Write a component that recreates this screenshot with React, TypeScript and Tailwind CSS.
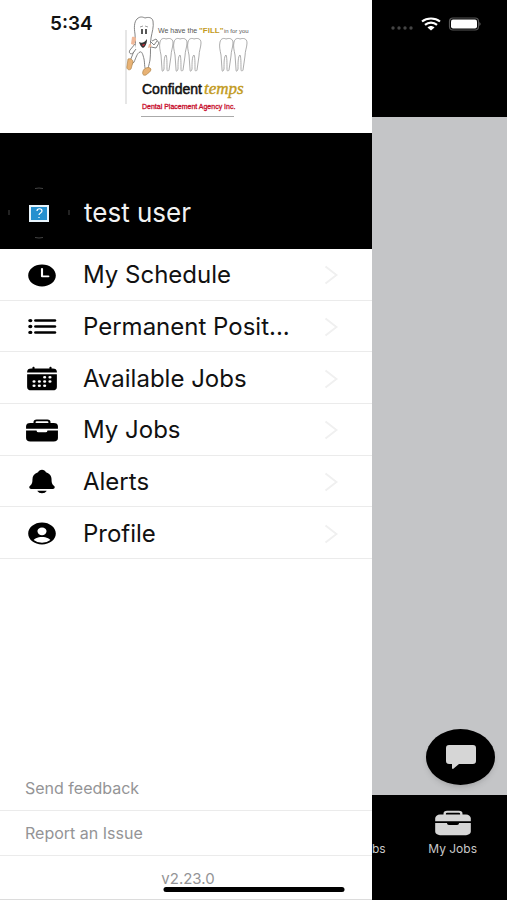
import React from 'react';
import {
  IoBriefcase,
  IoCalendar,
  IoList,
  IoNotifications,
  IoPersonCircle,
  IoTime,
} from 'react-icons/io5';
import type { IconType } from 'react-icons';

interface MenuItem {
  label: string;
  icon: IconType;
}

const menuItems: MenuItem[] = [
  { label: 'My Schedule', icon: IoTime },
  { label: 'Permanent Posit...', icon: IoList },
  { label: 'Available Jobs', icon: IoCalendar },
  { label: 'My Jobs', icon: IoBriefcase },
  { label: 'Alerts', icon: IoNotifications },
  { label: 'Profile', icon: IoPersonCircle },
];

const Logo: React.FC = () => (
  <svg viewBox="0 0 130 108" className="h-[108px] w-[130px]" role="img" aria-label="Confident Temps">
    <path d="M5 16V90" stroke="#dedede" strokeWidth="1.5" />
    {/* Mascot */}
    <g stroke="#666" strokeWidth="0.8" fill="#fff">
      <path d="M16 5c3-3 6-2 8-1 3-1 7-1 8 3 1 6-1 11-2 17-1 7 0 14-1 22-1 5-2 9-3 10-3 0-2-6-3-11-1-4-2-8-4-7-3 1-4 6-6 10-2 3-4 3-4 0 1-5 4-9 5-15 1-5 0-9 0-13-1-6-1-12 2-15z" />
      <path d="M14 30l-5 6c-2 3 1 5 3 3l3-4M29 27l4 4 3-4M30 33l5 1 3-5-3-4-4 2" />
    </g>
    <path d="M21 15v5M25 15v5" stroke="#222" strokeWidth="1.5" />
    <path d="M19 13l3-1M24 12l3 1" stroke="#777" strokeWidth="0.7" />
    <path d="M18 28c3 2 6 0 8-3 0 5-2 8-4 9-2-1-3-3-4-6z" fill="#333" />
    <path d="M21 31c1-1 2-1 3-1-1 2-2 3-3 1z" fill="#d32f3d" />
    <path d="M11 23c2-1 5 0 4 3l-2 5-3-1zM28 30c2 0 3 1 2 3l-3 1z" fill="#f0b99a" />
    <path
      d="M7 45c3-1 5 1 5 3l-2 7c-2 2-5 0-4-3zM22 57c1-3 6-5 8-2 0 3-3 4-5 6-3 1-4-1-3-4z"
      fill="#e8b274"
      stroke="#a67a3e"
      strokeWidth="0.6"
    />
    {/* Teeth */}
    {[38, 52, 66, 98, 112].map((x) => (
      <path
        key={x}
        transform={`translate(${x} 24)`}
        d="M1 4c1-4 4-4 6-3 3-1 7-1 7 4 0 4-2 8-2 13l-2 14c-1 2-2 1-2-1 0-6 0-12-1-14-2 1-2 8-2 14-1 3-2 3-2 0l-1-14c-1-5-2-9-1-13z"
        fill="#fff"
        stroke="#888"
        strokeWidth="0.7"
      />
    ))}
    <g style={{ fontFamily: '"Liberation Sans", sans-serif' }}>
      <text x="37" y="19" fontSize="7" fill="#555">We have the</text>
      <text x="78" y="19" fontSize="8" fontWeight="700" fill="#c29a20">"FILL"</text>
      <text x="103" y="19" fontSize="6" fill="#555">in for you</text>
      <text x="21" y="80" fontSize="14" fill="#111" stroke="#111" strokeWidth="0.5">Confident</text>
      <text x="21" y="95" fontSize="7" fill="#c8102e" stroke="#c8102e" strokeWidth="0.3">Dental Placement Agency Inc.</text>
    </g>
    <text x="83" y="80" fontSize="17" fontStyle="italic" fill="#c29a20" stroke="#c29a20" strokeWidth="0.4" fontFamily="Liberation Serif, serif">temps</text>
    <path d="M20 102.500H113" stroke="#aaa" />
  </svg>
);

const Avatar: React.FC = () => (
  <svg viewBox="0 0 62 52" className="h-[52px] w-[62px]" role="img" aria-label="Profile picture">
    <path d="M27 1.500q4-1 8 0M27 50.500q4 1 8 0M1 23v5M61 23v5" fill="none" stroke="#444" />
    <path d="M21 18h20v17H21z" fill="#e9f5fc" />
    <path d="M23 20h16v13H23z" fill="#2590cf" />
    <path d="M29 24c0-3 5-3 5 0 0 2-3 2-3 4M31 30v1" fill="none" stroke="#fff" strokeWidth="1.200" />
  </svg>
);

const Chevron: React.FC = () => (
  <svg viewBox="0 0 14 20" className="h-[20px] w-[14px] shrink-0" aria-hidden="true">
    <path d="M1.500 1.500L12.500 10l-11 8.500" fill="none" stroke="#f0f0f0" strokeWidth="2" />
  </svg>
);

const ChatBubble: React.FC = () => (
  <svg viewBox="0 0 32 24" className="h-[24px] w-[32px]" aria-hidden="true">
    <path d="M4 0h24q3 0 3 3v13q0 3-3 3H14l-6 5q-1 0-1-1v-4H4q-3 0-3-3V3q0-3 3-3z" fill="#d6d6d6" />
  </svg>
);

const StatusIcons: React.FC = () => (
  <div className="flex h-[47px] items-center justify-end pr-[26px]">
    <svg viewBox="0 0 90 14" className="h-[14px] w-[90px]" aria-hidden="true">
      <g fill="#454545">
        <circle cx="2" cy="11" r="1.700" />
        <circle cx="8" cy="11" r="1.700" />
        <circle cx="14" cy="11" r="1.700" />
        <circle cx="20" cy="11" r="1.700" />
      </g>
      <g fill="none" stroke="#fff" strokeWidth="2.200">
        <path d="M31 4.500c5-4 13-4 18 0" />
        <path d="M34 7.800c3.500-3 8.500-3 12 0" />
      </g>
      <path d="M36.500 10.500c2-2 5-2 7 0L40 13.500z" fill="#fff" />
      <rect x="58.500" y="1" width="29" height="12" rx="3.500" fill="none" stroke="#555" strokeWidth="1.200" />
      <rect x="60" y="2.500" width="26" height="9" rx="2" fill="#fff" />
      <path d="M88.500 5q2 2 0 4z" fill="#777" />
    </svg>
  </div>
);

const Drawer: React.FC = () => (
  <aside className="flex min-w-0 flex-col bg-white">
    <header className="relative flex h-[133px] justify-center pt-[14px]">
      <span className="absolute left-[50px] top-[12px] text-[19px] font-semibold leading-[24px] text-[#111]">5:34</span>
      <Logo />
    </header>

    <div className="flex h-[116px] items-end gap-[14px] bg-black pb-[10px] pl-[8px]">
      <Avatar />
      <span className="text-[26px] leading-[52px] text-[#f2f2f2]">test user</span>
    </div>

    <nav className="grid h-[310px] grid-rows-6">
      {menuItems.map(({ label, icon: Icon }) => (
        <button
          key={label}
          type="button"
          className="flex items-center border-b border-[#ebebeb] pl-[25px] pr-[34px] pt-[2px] text-left"
        >
          <Icon preserveAspectRatio="none" className="h-[27px] w-[34px] shrink-0 text-black" />
          <span className="ml-6 flex-1 whitespace-nowrap text-[24px] leading-[32px] text-[#111]">{label}</span>
          <Chevron />
        </button>
      ))}
    </nav>

    <footer className="mt-auto text-[#949496]">
      <button
        type="button"
        className="block h-[45px] w-full border-b border-[#ebebeb] pl-[25px] text-left text-[16px] leading-[20px]"
      >
        Send feedback
      </button>
      <button
        type="button"
        className="block h-[45px] w-full border-b border-[#ebebeb] pl-[25px] text-left text-[16px] leading-[20px]"
      >
        Report an Issue
      </button>
      <p className="h-[44px] border-b border-[#dcdcdc] pl-[4px] pt-[13px] text-center text-[15px] leading-[20px]">v2.23.0</p>
    </footer>
  </aside>
);

const PageBehind: React.FC = () => (
  <main className="flex min-w-0 flex-col overflow-hidden bg-[#c4c5c7]">
    <div className="h-[117px] bg-black">
      <StatusIcons />
    </div>

    <div className="flex flex-1 items-end justify-end pb-[10px] pr-[12px]">
      <button
        type="button"
        aria-label="Open chat"
        className="flex h-[56px] w-[69px] items-center justify-center rounded-[50%] bg-black shadow-md"
      >
        <ChatBubble />
      </button>
    </div>

    <nav className="flex h-[105px] items-start justify-between bg-black pr-[30px] pt-[13px] text-[12px] leading-[16px] text-[#c9c9c9]">
      <button type="button" aria-label="Available Jobs" className="pt-[33px]">
        bs
      </button>
      <button type="button" className="flex flex-col items-center gap-[3px]">
        <IoBriefcase preserveAspectRatio="none" className="h-[30px] w-[38px] text-[#d6d6d6]" />
        My Jobs
      </button>
    </nav>
  </main>
);

export default function App() {
  return (
    <div className="relative grid min-h-screen grid-cols-[372fr_135fr] bg-white font-['Inter',sans-serif]">
      <Drawer />
      <PageBehind />
      <div className="absolute bottom-[8px] left-1/2 h-[5px] w-[181px] -translate-x-1/2 rounded-full bg-black" />
    </div>
  );
}
